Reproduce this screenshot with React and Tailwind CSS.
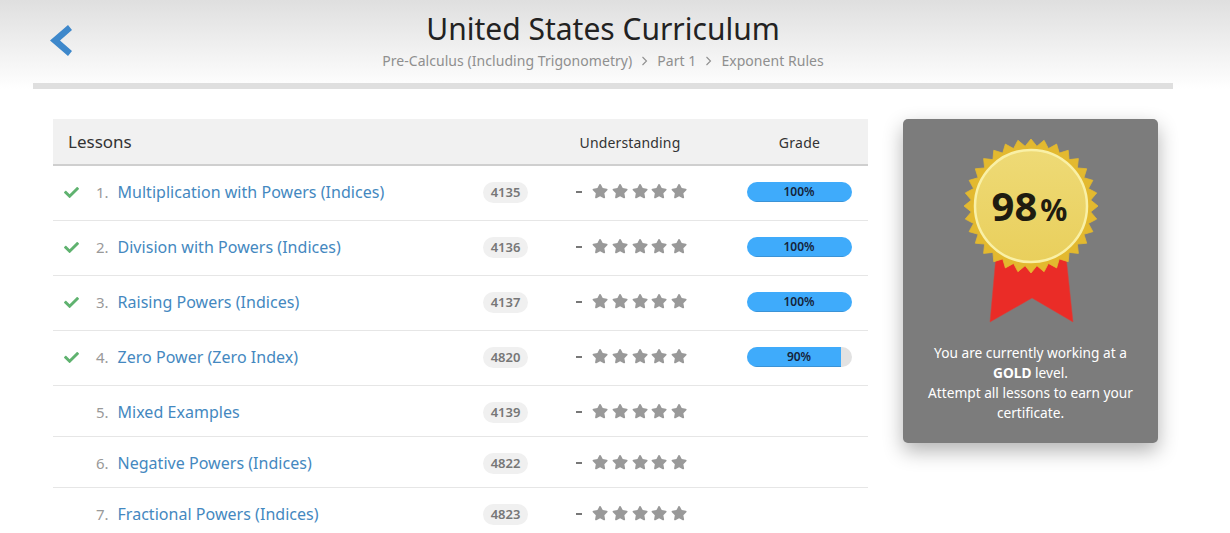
import React from "react";
import { FaCheck, FaStar } from "react-icons/fa";

const lessons = [
  { n: 1, t: "Multiplication with Powers (Indices)", c: "4135", g: 100, h: "h-[55px] pb-[2px]" },
  { n: 2, t: "Division with Powers (Indices)", c: "4136", g: 100, h: "h-[55px] pb-[2px]" },
  { n: 3, t: "Raising Powers (Indices)", c: "4137", g: 100, h: "h-[55px] pb-[2px]" },
  { n: 4, t: "Zero Power (Zero Index)", c: "4820", g: 90, h: "h-[55px] pb-[2px]" },
  { n: 5, t: "Mixed Examples", c: "4139", h: "h-[51px] pt-[2px]" },
  { n: 6, t: "Negative Powers (Indices)", c: "4822", h: "h-[51px] pt-[2px]" },
  { n: 7, t: "Fractional Powers (Indices)", c: "4823", h: "h-[51px] pt-[2px]" },
];

function sealPoints() {
  const pts = [];
  const teeth = 32;
  for (let i = 0; i < teeth * 2; i++) {
    const r = i % 2 === 0 ? 67 : 60;
    const a = (i * Math.PI) / teeth - Math.PI / 2;
    pts.push(`${(70 + r * Math.cos(a)).toFixed(2)},${(70 + r * Math.sin(a)).toFixed(2)}`);
  }
  return pts.join(" ");
}

function Medal() {
  return (
    <div className="relative w-[140px] h-[190px] mx-auto">
      <svg width="140" height="190" viewBox="0 0 140 190">
        <defs>
          <linearGradient id="face" x1="0" y1="0" x2="0" y2="1">
            <stop offset="0" stopColor="#eeda76" />
            <stop offset="1" stopColor="#e9cf5c" />
          </linearGradient>
        </defs>
        <polygon points="35,120 105,120 112,186 71,162 29,186" fill="#ea2c27" stroke="#d8403a" strokeWidth="0.5" />
        <polygon points={sealPoints()} fill="#e3b92f" strokeLinejoin="round" stroke="#e3b92f" strokeWidth="0.8" />
        <circle cx="70" cy="70" r="56" fill="url(#face)" stroke="#f9f0a6" strokeWidth="2.5" />
      </svg>
      <div className="absolute left-0 right-[2px] top-[41px] flex justify-center items-baseline text-[#1f1c10] font-bold leading-[58px]">
        <span className="text-[40px]">98</span>
        <span className="text-[30px] ml-[3px]">%</span>
      </div>
    </div>
  );
}

function Crumb() {
  return (
    <svg width="7" height="10" viewBox="0 0 7 10" className="mx-[9px]">
      <polyline points="1.5,1 5.5,5 1.5,9" fill="none" stroke="#8f8f8f" strokeWidth="1.1" />
    </svg>
  );
}

function Row({ l }) {
  return (
    <div className={`flex items-center border-b border-[#e6e6e6] ${l.h}`}>
      <div className="w-[43px] pl-[11px] shrink-0 text-[#5fb26f] text-[15px]">{l.g ? <FaCheck /> : null}</div>
      <div className="w-[21.5px] shrink-0 text-[15px] text-[#999]">{l.n}.</div>
      <div className="w-[365.5px] shrink-0 text-[16px] tracking-[0.03px] text-[#4488c0] whitespace-nowrap">{l.t}</div>
      <div className="w-[45px] h-[21px] mt-[1px] shrink-0 rounded-full bg-[#f0f0f0] text-[13px] font-semibold text-[#777] flex items-center justify-center">{l.c}</div>
      <div className="w-[48px] shrink-0 pl-[48px] text-[#777] text-[15px] font-semibold"><span className="block w-[6px] h-[2px] bg-[#777]" /></div>
      <div className="ml-[16px] -mt-[1px] flex gap-[3.6px] text-[#999] text-[16.2px] shrink-0">
        <FaStar /><FaStar /><FaStar /><FaStar /><FaStar />
      </div>
      {l.g ? (
        <div className="relative ml-[59.2px] w-[105px] h-[20px] rounded-[10px] overflow-hidden bg-[#e2e2e2] shrink-0">
          <div className="h-full bg-[#3fabfb] border-b border-[#3b93d6]" style={{ width: `${l.g === 90 ? 90 : 100}%` }} />
          <div className="absolute inset-0 flex items-center justify-center text-[12px] font-semibold text-[#15233a]">{l.g}%</div>
        </div>
      ) : null}
    </div>
  );
}

export default function App() {
  return (
    <div className="w-[1230px] h-[533px] overflow-hidden bg-white font-['Noto_Sans',sans-serif]">
      <header className="relative h-[89px] bg-gradient-to-b from-[#dfdfdf] to-white">
        <div className="flex flex-col items-center pt-[9px] pr-[24px]">
          <h1 className="text-[30px] leading-[40px] text-[#222]">United States Curriculum</h1>
          <div className="mt-[2px] flex items-center text-[14px] tracking-[0.05px] leading-[20px] text-[#8f8f8f]">
            <span>Pre-Calculus (Including Trigonometry)</span>
            <Crumb />
            <span>Part 1</span>
            <Crumb />
            <span>Exponent Rules</span>
          </div>
        </div>
        <svg width="24" height="34" viewBox="0 0 24 34" className="absolute left-[49px] top-[24px]">
          <polygon points="1,16.5 19,1 23,6 11,16.5 23,27 19,32" fill="#3e88cb" />
        </svg>
        <div className="absolute left-[33px] right-[57px] bottom-0 h-[6px] bg-[#dfdfdf]" />
      </header>
      <main className="flex items-start pt-[30px] pl-[53px]">
        <section className="w-[815px] shrink-0">
          <div className="flex items-center h-[47px] bg-[#f1f1f1] border-b-2 border-[#cfcfcf] text-[#333]">
            <div className="w-[501px] pl-[15px] text-[17px]">Lessons</div>
            <div className="w-[152px] text-center text-[14px] tracking-[0.15px] pt-[2px]">Understanding</div>
            <div className="ml-[41px] w-[105px] text-center text-[14px] tracking-[0.3px] pt-[2px]">Grade</div>
          </div>
          {lessons.map((l) => <Row key={l.n} l={l} />)}
        </section>
        <aside className="ml-[35px] w-[255px] h-[324px] shrink-0 rounded-[5px] bg-[#7c7c7c] shadow-[0_8px_20px_rgba(0,0,0,0.3)] pt-[17px] text-center text-white text-[13.7px] leading-[20px]">
          <Medal />
          <p className="mt-[17px] px-[16px]">You are currently working at a <b>GOLD</b> level.<br />Attempt all lessons to earn your certificate.</p>
        </aside>
      </main>
    </div>
  );
}
